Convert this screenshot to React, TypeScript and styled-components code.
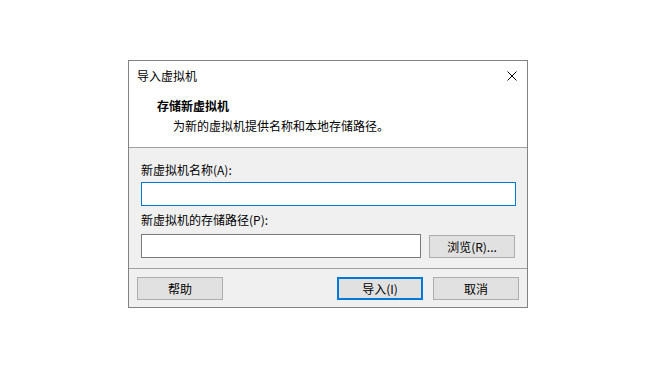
import React from "react";
import styled, { createGlobalStyle } from "styled-components";

const Global = createGlobalStyle`
  html, body { margin: 0; padding: 0; background: #ffffff; }
  body { font-family: "Noto Sans CJK SC", "Microsoft YaHei", "Noto Sans", sans-serif; font-size: 12px; color: #000; }
  * { box-sizing: border-box; }
`;

const Page = styled.div`
  width: 670px;
  height: 389px;
  padding: 60px 0 0 128px;
  background: #ffffff;
`;

const Dialog = styled.div`
  width: 400px;
  height: 248px;
  border: 1px solid #838383;
  display: flex;
  flex-direction: column;
  background: #ffffff;
`;

const TitleBar = styled.div`
  height: 30px;
  display: flex;
  align-items: center;
  justify-content: space-between;
  padding-left: 8px;
  line-height: 16px;
`;

const CloseButton = styled.div`
  width: 30px;
  height: 30px;
  display: flex;
  align-items: center;
  justify-content: center;
`;

const Header = styled.div`
  height: 57px;
  border-bottom: 1px solid #a0a0a0;
  padding: 7px 0 0 28px;
  display: flex;
  flex-direction: column;
  gap: 4px;
`;

const Heading = styled.div`
  font-weight: 700;
  line-height: 16px;
`;

const SubHeading = styled.div`
  line-height: 16px;
  padding-left: 16px;
`;

const Body = styled.div`
  height: 120px;
  background: #f0f0f0;
  padding: 14px 11px 0 12px;
  display: flex;
  flex-direction: column;
`;

const Label = styled.div<{ $top?: number }>`
  line-height: 16px;
  margin-top: ${(p) => p.$top ?? 0}px;
`;

const Input = styled.div<{ $focused?: boolean; $width?: string; $top?: number }>`
  height: 24px;
  flex: none;
  width: ${(p) => p.$width ?? "100%"};
  margin-top: ${(p) => p.$top ?? 0}px;
  background: #ffffff;
  border: 1px solid ${(p) => (p.$focused ? "#0078d7" : "#7a7a7a")};
`;

const Row = styled.div`
  display: flex;
  align-items: flex-end;
  gap: 8px;
  margin-top: 6px;
`;

const Button = styled.div<{ $default?: boolean }>`
  width: 86px;
  height: 23px;
  display: flex;
  align-items: center;
  justify-content: center;
  background: #e1e1e1;
  border: ${(p) => (p.$default ? "2px solid #0078d7" : "1px solid #adadad")};
  line-height: 16px;
`;

const Footer = styled.div`
  flex: 1;
  background: #f0f0f0;
  border-top: 1px solid #a0a0a0;
  padding: 8px 8px 0 8px;
  display: flex;
  gap: 10px;
`;

const Spacer = styled.div`
  flex: 1;
`;

export default function App() {
  return (
    <Page>
      <Global />
      <Dialog>
        <TitleBar>
          <span>导入虚拟机</span>
          <CloseButton>
            <svg width="10" height="10" viewBox="0 0 10 10">
              <path d="M0.5 0.5 L9.5 9.5 M9.5 0.5 L0.5 9.5" stroke="#000" strokeWidth="1" fill="none" />
            </svg>
          </CloseButton>
        </TitleBar>
        <Header>
          <Heading>存储新虚拟机</Heading>
          <SubHeading>为新的虚拟机提供名称和本地存储路径。</SubHeading>
        </Header>
        <Body>
          <Label>新虚拟机名称(A):</Label>
          <Input $focused $top={4} />
          <Label $top={6}>新虚拟机的存储路径(P):</Label>
          <Row>
            <Input $width="280px" />
            <Button>浏览(R)...</Button>
          </Row>
        </Body>
        <Footer>
          <Button>帮助</Button>
          <Spacer />
          <Button $default>导入(I)</Button>
          <Button>取消</Button>
        </Footer>
      </Dialog>
    </Page>
  );
}
